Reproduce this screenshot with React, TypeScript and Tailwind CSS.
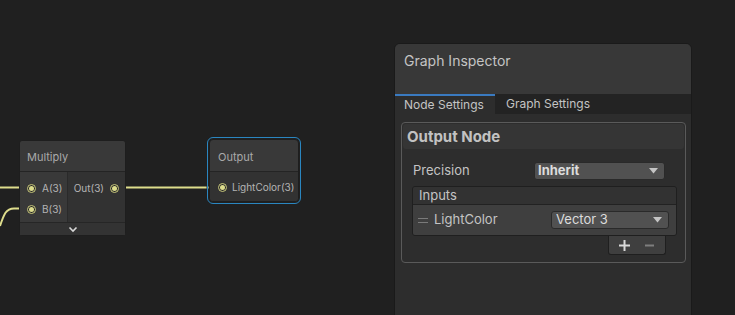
import React from 'react';

const font = { fontFamily: 'Inter, "Noto Sans", sans-serif' };

function Port() {
  return (
    <span className="flex h-[9px] w-[9px] items-center justify-center rounded-full border border-[#c9c97c] bg-[#2a2a2a]">
      <span className="h-[5px] w-[5px] rounded-full bg-[#dcdc8c]" />
    </span>
  );
}

function Wires() {
  return (
    <svg className="absolute inset-0 pointer-events-none" width="394" height="315">
      <path d="M0 187.5 H22" stroke="#dedd8c" strokeWidth="2" fill="none" />
      <path d="M22 187.5 H28" stroke="#8a8a66" strokeWidth="2" fill="none" />
      <path d="M0 226 C4 214 6 208.5 14 208.5 H22" stroke="#dedd8c" strokeWidth="2" fill="none" />
      <path d="M22 208.5 H28" stroke="#8a8a66" strokeWidth="2" fill="none" />
      <path d="M119 187.5 H126" stroke="#8a8a66" strokeWidth="2" fill="none" />
      <path d="M126 187.5 H206" stroke="#dedd8c" strokeWidth="2" fill="none" />
      <path d="M206 187.5 H216" stroke="#8a8a66" strokeWidth="2" fill="none" />
    </svg>
  );
}

function MultiplyNode() {
  return (
    <div className="absolute left-[19px] top-[140px] w-[107px] rounded-[3px] border border-[#1e1e1e] bg-[#393939] text-[#b4b4b4]">
      <div className="flex h-[31px] items-center border-b border-[#242424] px-[7px] pt-[3px] text-[11px] text-[#a9a9a9]">Multiply</div>
      <div className="flex h-[50px]">
        <div className="flex w-[47px] flex-col gap-[7px] bg-[#393939] pl-[7px] pt-[9px] text-[10px]">
          <div className="flex items-center gap-[6px] h-[14px]">
            <Port />
            <span>A(3)</span>
          </div>
          <div className="flex items-center gap-[6px] h-[14px]">
            <Port />
            <span>B(3)</span>
          </div>
        </div>
        <div className="flex flex-1 items-start justify-end border-l border-[#2a2a2a] bg-[#323232] pr-[6px] pt-[9px] text-[10px]">
          <div className="flex items-center gap-[6px] h-[14px]">
            <span>Out(3)</span>
            <Port />
          </div>
        </div>
      </div>
      <div className="flex h-[13px] items-center justify-center border-t border-[#262626] bg-[#333333] pt-px">
        <svg width="10" height="7" viewBox="0 0 10 7">
          <path d="M1.5 1.5 L5 5 L8.5 1.5" stroke="#d8d8d8" strokeWidth="1.6" fill="none" />
        </svg>
      </div>
    </div>
  );
}

function OutputNode() {
  return (
    <div className="absolute left-[207px] top-[137px] w-[94px] rounded-[6px] border border-[#2a86c0] p-px">
      <div className="rounded-[4px] border border-[#1e1e1e] bg-[#393939] text-[#b4b4b4]">
        <div className="flex h-[32px] items-center border-b border-[#242424] px-[8px] pt-[3px] text-[11px] text-[#a9a9a9]">Output</div>
        <div className="flex h-[29px] items-center gap-[5px] rounded-b-[4px] bg-[#323232] pl-[8px] pt-px text-[10px]">
          <Port />
          <span>LightColor(3)</span>
        </div>
      </div>
    </div>
  );
}

function Caret() {
  return (
    <svg width="9" height="6" viewBox="0 0 9 6">
      <path d="M0 0 H9 L4.5 5.5 Z" fill="#c4c4c4" />
    </svg>
  );
}

function Inspector() {
  return (
    <div className="mt-[43px] flex h-[282px] w-[298px] shrink-0 flex-col overflow-hidden rounded-t-[6px] border border-[#1a1a1a] bg-[#2d2d2d] text-[#c4c4c4]">
      <div className="flex h-[50px] items-start bg-[#383838] px-[9px] pt-[6px] text-[14px]">Graph Inspector</div>
      <div className="flex h-[20px] bg-[#232323] text-[12px]">
        <div className="flex w-[100px] items-center border-t-2 border-[#3a7ac0] bg-[#2d2d2d] pl-[9px]">Node Settings</div>
        <div className="flex items-center pl-[11px]">Graph Settings</div>
      </div>
      <div className="px-[6px] pt-[8px] pr-[5px]">
        <div className="h-[141px] rounded-[4px] border border-[#5a5a5a] bg-[#2d2d2d] p-px">
          <div className="flex h-[25px] items-center rounded-[3px] bg-[#353535] px-[4px] pt-[2px] text-[15px] font-bold text-[#c2c2c2]">Output Node</div>
          <div className="mt-[13px] flex h-[18px] items-center pl-[10px] pr-[19px] text-[13px]">
            <span className="flex-1">Precision</span>
            <div className="flex h-[18px] w-[131px] items-center justify-between rounded-[3px] border border-[#2a2a2a] bg-[#515151] pl-[3px] pr-[6px] font-bold text-[#dcdcdc]">
              <span>Inherit</span>
              <Caret />
            </div>
          </div>
          <div className="ml-[9px] mt-[6px] w-[265px]">
            <div className="overflow-hidden rounded-[3px] border border-[#1f1f1f]">
              <div className="flex h-[18px] items-center border-b border-[#222222] bg-[#323232] pl-[6px] text-[13px]">Inputs</div>
              <div className="flex h-[30px] items-center bg-[#3f3f3f] pl-[5px] pr-[7px] text-[13px]">
                <div className="flex w-[11px] flex-col gap-[3px]">
                  <span className="h-px w-[10px] bg-[#7a7a7a]" />
                  <span className="h-px w-[10px] bg-[#7a7a7a]" />
                </div>
                <span className="ml-[5px] flex-1">LightColor</span>
                <div className="flex h-[18px] w-[118px] items-center justify-between rounded-[3px] border border-[#2a2a2a] bg-[#515151] pl-[4px] pr-[6px] text-[#dcdcdc]">
                  <span>Vector 3</span>
                  <Caret />
                </div>
              </div>
            </div>
            <div className="flex justify-end pr-[11px]">
              <div className="flex h-[19px] w-[58px] items-center gap-[14px] rounded-b-[3px] border border-t-0 border-[#1f1f1f] bg-[#3f3f3f] pl-[10px]">
                <svg width="11" height="11" viewBox="0 0 11 11">
                  <path d="M0 5.5 H11 M5.5 0 V11" stroke="#d8d8d8" strokeWidth="2" />
                </svg>
                <svg width="11" height="11" viewBox="0 0 11 11">
                  <path d="M1 5.5 H10" stroke="#7e7e7e" strokeWidth="2" />
                </svg>
              </div>
            </div>
          </div>
        </div>
      </div>
    </div>
  );
}

export default function App() {
  return (
    <div className="flex h-[315px] w-[735px] overflow-hidden bg-[#202020]" style={font}>
      <div className="relative h-full w-[394px] shrink-0">
        <Wires />
        <MultiplyNode />
        <OutputNode />
      </div>
      <Inspector />
    </div>
  );
}
